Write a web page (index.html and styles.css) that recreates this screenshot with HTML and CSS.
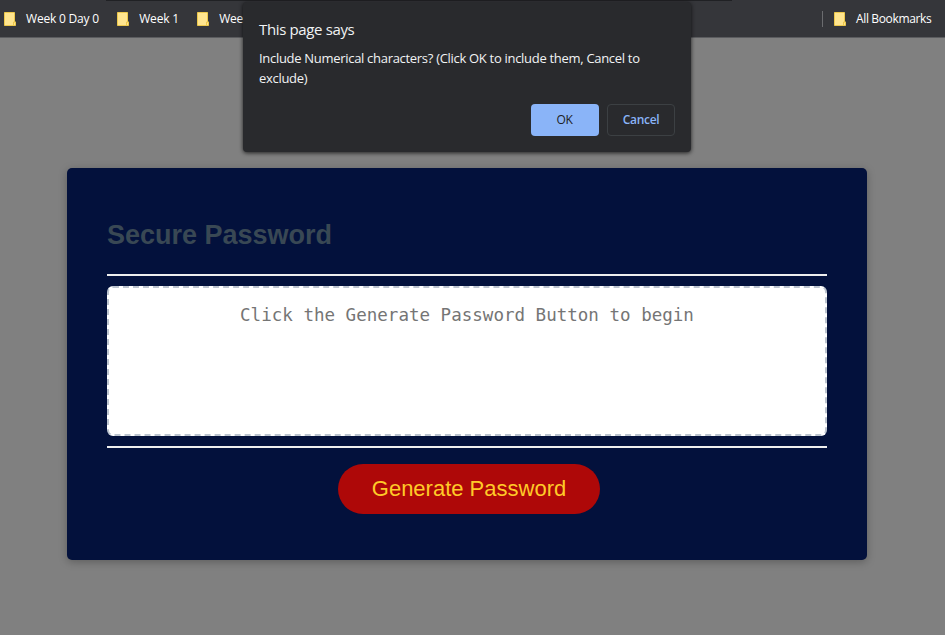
FILE: index.html
```html
<!DOCTYPE html>
<html lang="en">
<head>
<meta charset="utf-8">
<title>Password Generator</title>
<link rel="stylesheet" href="styles.css">
</head>
<body>
<svg class="defs" width="0" height="0" aria-hidden="true">
  <symbol id="folder" viewBox="0 0 12 14">
    <path d="M.5.5h10v9.500h1v3.500H.5z" fill="#ffe58f" stroke="#edc84b"/>
    <path d="M9.500 13.500v-3.500h2" fill="none" stroke="#edc84b"/>
  </symbol>
</svg>
<nav class="bookmarks">
  <div class="bookmark"><svg class="folder"><use href="#folder"/></svg><span>Week 0 Day 0</span></div>
  <div class="bookmark"><svg class="folder"><use href="#folder"/></svg><span>Week 1</span></div>
  <div class="bookmark"><svg class="folder"><use href="#folder"/></svg><span>Week 2</span></div>
  <div class="bookmark all"><svg class="folder"><use href="#folder"/></svg><span>All Bookmarks</span></div>
</nav>
<main class="card">
  <h2>Secure Password</h2>
  <div class="card-body">
    <textarea readonly placeholder="Click the Generate Password Button to begin" aria-label="Generated Password"></textarea>
  </div>
  <div class="card-footer"><button class="generate">Generate Password</button></div>
</main>
<div class="dialog" role="dialog">
  <div class="dialog-title">This page says</div>
  <div class="message">Include Numerical characters? (Click OK to include them, Cancel to<br>exclude)</div>
  <div class="actions"><button class="ok">OK</button><button class="cancel">Cancel</button></div>
</div>
</body>
</html>
```
FILE: styles.css
```css
* { box-sizing: border-box; }
body {
  margin: 0;
  height: 635px;
  overflow: hidden;
  background: #808080;
  font-family: "Liberation Sans", Arial, sans-serif;
}
.defs { position: absolute; }
.bookmarks {
  display: flex;
  align-items: center;
  height: 38px;
  padding: 0 13px 0 4px;
  background: linear-gradient(#202124, #202124) 106px 0 / 626px 1px no-repeat #35363a;
  border-bottom: 1px solid #5b5c5f;
  color: #fff;
  font: 12px/16px "Open Sans", "Noto Sans", sans-serif;
  white-space: nowrap;
}
.bookmark { display: flex; align-items: center; margin-right: 18.3px; }
.bookmark span { letter-spacing: -0.2px; }
.folder { width: 12px; height: 14px; margin-right: 10px; flex: none; }
.bookmark.all { margin: 0 0 0 auto; padding-left: 11px; border-left: 1px solid #6b6c6f; }
.bookmark.all span { width: 76px; letter-spacing: -0.36px; }
.card {
  width: 800px;
  height: 392px;
  margin: 130px 0 0 67px;
  padding: 40px;
  background: #03113c;
  border-radius: 5px;
  box-shadow: 0 2px 8px rgba(0, 0, 0, .27);
}
h2 {
  height: 66px;
  margin: 0;
  padding-top: 11px;
  color: #394854;
  font-size: 27px;
  line-height: 33px;
}
.card-body {
  height: 174px;
  padding: 10px 0;
  border-top: 2px solid #eee;
  border-bottom: 2px solid #eee;
}
textarea {
  display: block;
  width: 720px;
  height: 150px;
  padding: 15px;
  resize: none;
  overflow: hidden;
  border: 2px dashed #bcc4cf;
  border-radius: 6px;
  background: #fff;
  font: 17.55px/25px "DejaVu Sans Mono", monospace;
  text-align: center;
}
textarea::placeholder { color: #757575; }
.card-footer { padding: 16px 0 0 231px; }
.generate {
  display: block;
  width: 262px;
  height: 50px;
  padding: 0;
  border: 0;
  border-radius: 25px;
  background: #ae0808;
  color: #ffca28;
  font: 22px/26px "Liberation Sans", Arial, sans-serif;
}
.dialog {
  position: absolute;
  top: 2px;
  left: 243px;
  width: 448px;
  height: 150px;
  padding: 16px;
  background: #292a2d;
  border-radius: 4px;
  box-shadow: 0 1px 4px rgba(0, 0, 0, .75);
  color: #f1f3f4;
  font: 13px/20px "Open Sans", "Noto Sans", sans-serif;
  white-space: nowrap;
}
.dialog-title { font-size: 15px; line-height: 22px; letter-spacing: -0.36px; }
.message { margin-top: 8px; letter-spacing: -0.3px; }
.actions { display: flex; justify-content: flex-end; gap: 8px; margin-top: 16px; }
.actions button {
  width: 68px;
  height: 32px;
  padding: 0;
  border: 0;
  border-radius: 4px;
  font: 12px/16px "Open Sans", "Noto Sans", sans-serif;
  letter-spacing: -0.3px;
}
.actions .ok { padding-right: 1px; background: #8ab4f8; color: #202124; }
.actions .cancel { border: 1px solid #3c4043; background: transparent; color: #8ab4f8; font-weight: 600; }
```
